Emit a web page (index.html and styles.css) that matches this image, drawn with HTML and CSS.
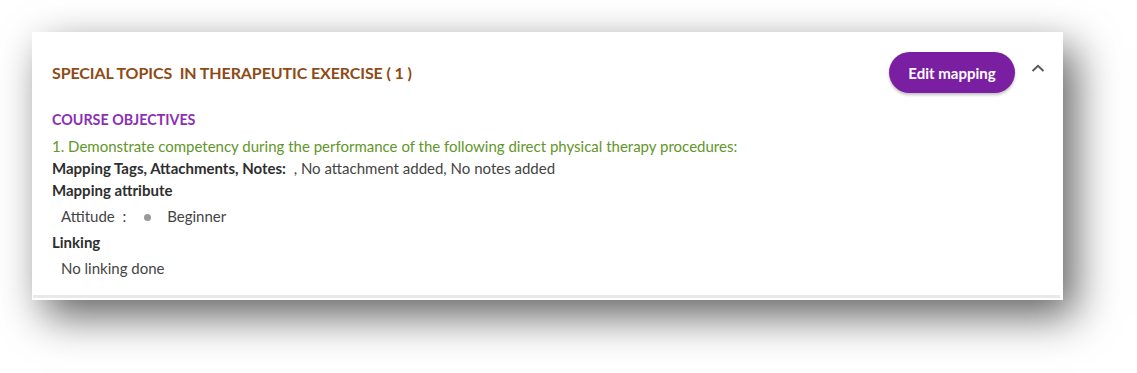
FILE: index.html
```html
<!DOCTYPE html>
<html>
<head>
<meta charset="utf-8">
<link rel="stylesheet" href="styles.css">
</head>
<body>
<div class="shot">
  <div class="card">
    <div class="header">
      <div class="title">SPECIAL TOPICS &nbsp;IN THERAPEUTIC EXERCISE ( 1 )</div>
      <div class="actions">
        <button class="edit-btn">Edit mapping</button>
        <svg class="chevron" width="14" height="8" viewBox="0 0 14 8"><path d="M1.5 7 L7 1.8 L12.5 7" fill="none" stroke="#5a5a5a" stroke-width="2"/></svg>
      </div>
    </div>
    <div class="section-label">COURSE OBJECTIVES</div>
    <div class="objective">1. Demonstrate competency during the performance of the following direct physical therapy procedures:</div>
    <div class="row"><span class="strong">Mapping Tags, Attachments, Notes:</span><span class="muted">&nbsp; , No attachment added, No notes added</span></div>
    <div class="row strong-row">Mapping attribute</div>
    <div class="row indent gap">Attitude &nbsp;:<span class="dot"></span>Beginner</div>
    <div class="row strong-row gap">Linking</div>
    <div class="row indent gap">No linking done</div>
  </div>
  <div class="bottom-line"></div>
</div>
</body>
</html>
```

FILE: styles.css
```css
html, body {
  margin: 0;
  padding: 0;
  background: #ffffff;
}
body {
  font-family: Lato, "Open Sans", sans-serif;
  color: #333;
  min-height: 373px;
  padding-top: 32px;
  padding-left: 32px;
  box-sizing: border-box;
}
.shot {
  width: 1031px;
  height: 268px;
  background: #ffffff;
  box-shadow: 12px 16px 40px rgba(0, 0, 0, 0.62);
  display: flex;
  flex-direction: column;
}
.card {
  flex: 1;
  padding: 20px 18px 0 20px;
}
.header {
  display: flex;
  align-items: center;
  justify-content: space-between;
  height: 41px;
}
.title {
  font-size: 16px;
  font-weight: 700;
  color: #8e4b16;
  letter-spacing: -0.1px;
}
.actions {
  display: flex;
  align-items: center;
  gap: 16px;
}
.edit-btn {
  height: 41px;
  width: 126px;
  border: none;
  border-radius: 21px;
  background: #7b1fa2;
  color: #fff;
  font-family: Lato, sans-serif;
  font-weight: 700;
  font-size: 15px;
  box-shadow: 0 2px 3px rgba(0, 0, 0, 0.25);
  padding: 0;
}
.chevron {
  display: block;
  margin-top: -10px;
}
.section-label {
  margin-top: 16px;
  line-height: 22px;
  font-size: 14.3px;
  font-weight: 700;
  color: #8b2fb5;
}
.objective {
  margin-top: 4px;
  line-height: 22px;
  font-size: 15px;
  color: #62962a;
}
.row {
  line-height: 22px;
  font-size: 15px;
  color: #444;
}
.row.gap {
  margin-top: 4px;
}
.strong {
  font-weight: 700;
  color: #2e2e2e;
}
.strong-row {
  font-weight: 700;
  color: #2e2e2e;
}
.muted {
  color: #444;
}
.indent {
  padding-left: 9px;
}
.dot {
  display: inline-block;
  width: 7px;
  height: 7px;
  border-radius: 50%;
  background: #9a9a9a;
  margin: 0 16px 1px 18px;
  vertical-align: middle;
}
.bottom-line {
  height: 3px;
  margin: 0 3px 2px 1px;
  background: #e9e9e9;
}
```
